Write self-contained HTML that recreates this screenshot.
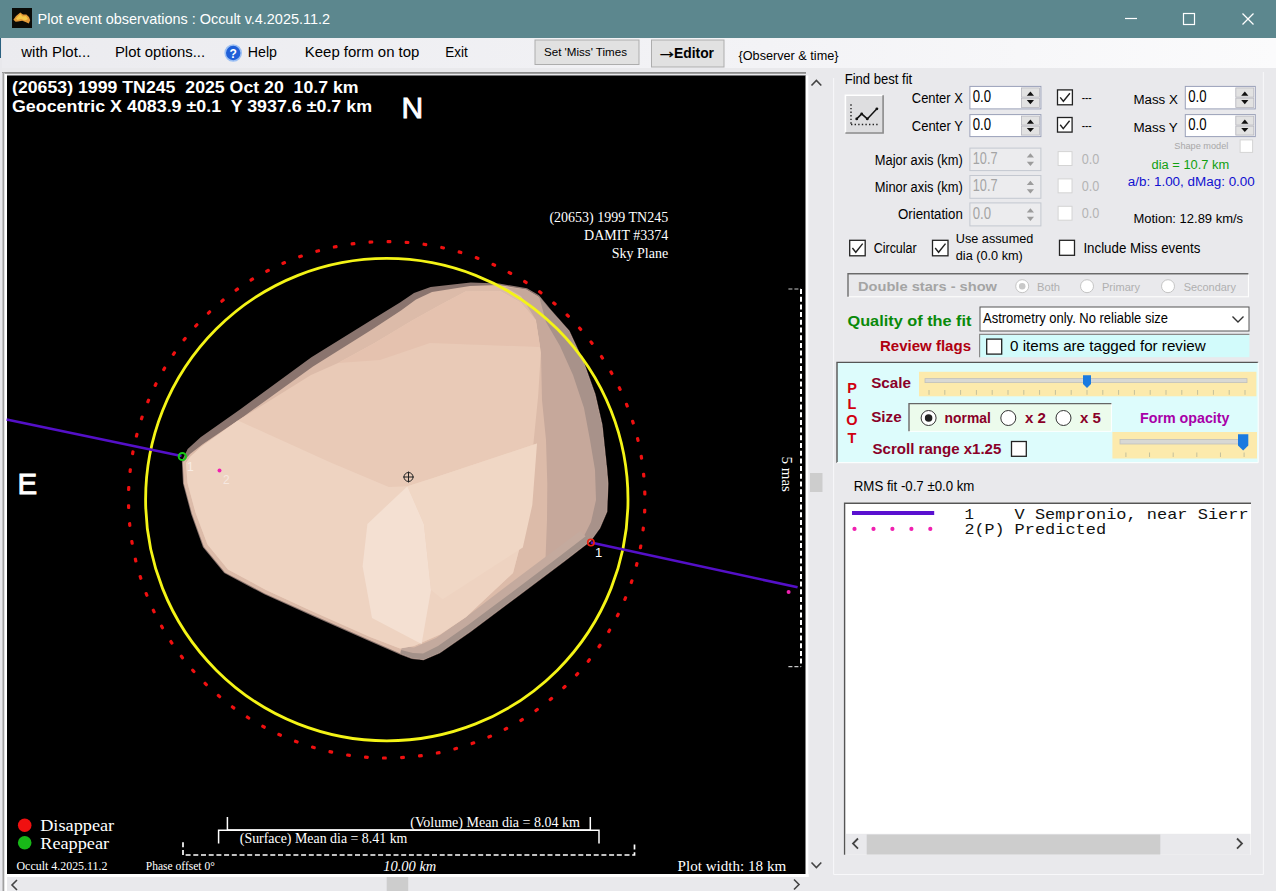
<!DOCTYPE html>
<html lang="en"><head><meta charset="utf-8"><title>Plot event observations : Occult v.4.2025.11.2</title>
<style>html,body{margin:0;padding:0;background:#e9e9ec;overflow:hidden}body{width:1276px;height:891px}svg text{white-space:pre}</style></head>
<body>
<svg width="1276" height="891" viewBox="0 0 1276 891" style="display:block">
<defs><linearGradient id="mg" x1="0" x2="1" y1="0" y2="0"><stop offset="0" stop-color="#ebebef"/><stop offset="0.6" stop-color="#f3f3f6"/><stop offset="1" stop-color="#fbfbfc"/></linearGradient></defs>
<rect x="0" y="0" width="1276" height="891" fill="#e9e9ec"/>
<rect x="0" y="0" width="1276" height="38" fill="#5c878e"/>
<rect x="12" y="8" width="20" height="20" fill="#0a0a06"/>
<path d="M13.4 19.8 L16 16 L20.3 12.5 L23 14.5 L26.4 14.6 L29 17 L30.2 20.3 L28.8 23.6 L25.5 22 L22.2 20.8 L18 21.6 L15.6 21.7 Z" fill="#e09838"/>
<path d="M16 18.5 L20.3 14 L22.5 16.5 L26 16 L28 19 L25 20.5 L21 19 L17.5 20 Z" fill="#f4c848"/>
<text x="37.6" y="24" font-size="15" fill="#fff" font-family='"Liberation Sans", Arial, sans-serif' textLength="292.4" lengthAdjust="spacingAndGlyphs" xml:space="preserve">Plot event observations : Occult v.4.2025.11.2</text>
<line x1="1125" y1="18.5" x2="1137" y2="18.5" stroke="#fff" stroke-width="1.2" />
<rect x="1183.5" y="13.5" width="11" height="11" fill="none" stroke="#fff" stroke-width="1.2"/>
<path d="M1242.5 13.5 L1253.5 24.5 M1253.5 13.5 L1242.5 24.5" stroke="#fff" stroke-width="1.3" fill="none"/>
<rect x="2" y="38" width="1274" height="30" fill="url(#mg)"/>
<rect x="0" y="38" width="2" height="853" fill="#e8e8ec"/>
<rect x="0" y="38" width="1" height="20" fill="#2a6080"/>
<text x="21.3" y="57" font-size="15" fill="#000" font-family='"Liberation Sans", Arial, sans-serif' textLength="69" lengthAdjust="spacingAndGlyphs" xml:space="preserve">with Plot...</text>
<text x="114.9" y="57" font-size="15" fill="#000" font-family='"Liberation Sans", Arial, sans-serif' textLength="90.2" lengthAdjust="spacingAndGlyphs" xml:space="preserve">Plot options...</text>
<circle cx="233.2" cy="53" r="8" fill="#1f5fd8" stroke="#9cc0f4" stroke-width="1.6"/>
<text x="233.2" y="57.6" font-size="12" fill="#fff" font-family='"Liberation Sans", Arial, sans-serif' font-weight="bold" text-anchor="middle" xml:space="preserve">?</text>
<text x="247.8" y="57" font-size="15" fill="#000" font-family='"Liberation Sans", Arial, sans-serif' textLength="29.2" lengthAdjust="spacingAndGlyphs" xml:space="preserve">Help</text>
<text x="304.8" y="57" font-size="15" fill="#000" font-family='"Liberation Sans", Arial, sans-serif' textLength="114.6" lengthAdjust="spacingAndGlyphs" xml:space="preserve">Keep form on top</text>
<text x="445.3" y="57" font-size="15" fill="#000" font-family='"Liberation Sans", Arial, sans-serif' textLength="22.5" lengthAdjust="spacingAndGlyphs" xml:space="preserve">Exit</text>
<rect x="535" y="40" width="104" height="24.5" fill="#e1e1e1" stroke="#adadad" stroke-width="1"/>
<text x="544" y="56.3" font-size="11.5" fill="#000" font-family='"Liberation Sans", Arial, sans-serif' textLength="83" lengthAdjust="spacingAndGlyphs" xml:space="preserve">Set &#x27;Miss&#x27; Times</text>
<rect x="651.5" y="40" width="72.5" height="27" fill="#e1e1e1" stroke="#adadad" stroke-width="1"/>
<text x="656.5" y="57.5" font-size="21" fill="#000" font-family='"Liberation Sans", Arial, sans-serif' font-weight="bold" stroke="#000" stroke-width="0.4" xml:space="preserve">→</text>
<text x="674" y="58.4" font-size="14.5" fill="#000" font-family='"Liberation Sans", Arial, sans-serif' font-weight="bold" textLength="40" lengthAdjust="spacingAndGlyphs" xml:space="preserve">Editor</text>
<text x="738.5" y="59.5" font-size="13.5" fill="#000" font-family='"Liberation Sans", Arial, sans-serif' textLength="100" lengthAdjust="spacingAndGlyphs" xml:space="preserve">{Observer &amp; time}</text>
<line x1="2" y1="72.5" x2="806" y2="72.5" stroke="#8c8c8c" stroke-width="1" />
<line x1="5" y1="73.5" x2="806" y2="73.5" stroke="#a0a0a0" stroke-width="1" />
<rect x="2.5" y="72" width="2" height="819" fill="#a0a0a0"/>
<rect x="4.5" y="74" width="2.5" height="817" fill="#ffffff"/>
<rect x="7" y="75.5" width="799" height="798.5" fill="#000"/>
<g id="asteroid">
<polygon points="183,458.5 187.7,449 200.6,437.3 240.7,409 311.4,357.2 370.3,320.7 400,302.4 414,293 430.6,287 470.7,282.4 499,283.6 527,288.3 539,295.3 550.8,309.5 569.6,330.7 583.8,361.3 595.6,394.3 602.6,425 607.4,470 608.5,483.6 607.4,511.8 600.3,528.3 590.9,541.3 565,561.3 517.8,596.7 470.7,632 440,653.2 423.6,660.3 411.8,659 400,654.4 370.3,641.4 311.4,615.5 264.3,594.3 224.2,573.1 203,547.2 191.2,514.2 183,483.6 181.8,460" fill="#8a746e" />
<polygon points="184,461 190,454 203,444 243,417 313,366.5 372,329.5 401,310.5 416,299.5 432,292 470,286 499,285 526,289.5 538,296.5 550,310 568.8,331 583,361.5 594.8,394.5 601.8,425 606.6,470 607.7,483.6 606.6,511.6 599.5,528 590.3,540.7 564.5,560.6 517.3,596 470.2,631.3 439.6,652.4 423.5,659.4 412,658.1 400.3,653.5 370.6,640.5 311.8,614.6 264.8,593.5 225,572.4 203.8,546.8 192,514 183.8,483.5 182.7,462" fill="#dcbba9" />
<polygon points="505,287 526,289.5 538,296.5 550,310 568.8,331 583,361.5 594.8,394.5 601.8,425 606.6,470 607.7,483.6 606.6,511.6 599.5,528 590.3,540.7 564.5,560.6 545,572 547,520 547.3,484 546,440 542,400 541,353 536,320 521,296" fill="#c6a89b" />
<polygon points="539,296 550,310 568.8,331 583,361.5 594.8,394.5 601.8,425 606.6,470 607.7,483.6 606.6,511.6 599.5,528 590.3,540.7 584,536 591,522 596,500 595,470 590,440 584,408 573,375 560,346 546,322" fill="#a8928a" />
<polygon points="590.3,540.7 564.5,560.6 517.3,596 470.2,631.3 439.6,652.4 423.5,659.4 412,658.1 400.3,653.5 402,646 414,647.5 436,638 466,617 512,582 552,552 580,531" fill="#c4aa9e" />
<polygon points="590.3,540.7 564.5,560.6 517.3,596 470.2,631.3 439.6,652.4 423.5,659.4 412,658.1 400.3,653.5 401,650 413,653 423,653.5 438,646 468,625 515,590 560,556 586,536" fill="#a39189" />
<polygon points="186,463 190.5,456.5 201.5,446.5 241,418.5 311,375 338,363 375,342.7 413,320 440,305 465.5,291.5 500.6,291.3 520.7,302.6 535.7,320.2 540.8,352.8 538.2,395.4 533.2,445.5 529.5,475 528.4,500 527.2,519 513,573 466,617 440,634.4 414,646 400,648.5 370,637 311.5,611 266,590 228,569.5 207.5,544.5 195.5,512.5 187.5,483" fill="#e9cab7" />
<polygon points="338,363 375,342.7 413,320 440,305 465.5,291.5 500.6,291.3 520.7,302.6 535.7,320.2 540,347 430,343 380,360" fill="#e5c2af" />
<polygon points="186,463 190.5,456.5 201.5,446.5 238,420.5 330,462.3 388.8,487 407.4,486.2 431,478.8 537,443.5 533.2,445.5 529.5,475 528.4,500 527.2,519 513,573 466,617 440,634.4 414,646 400,648.5 370,637 311.5,611 266,590 228,569.5 207.5,544.5 195.5,512.5 187.5,483" fill="#eed3c1" />
<polygon points="407.4,486.2 367.4,523.9 362.6,566.3 372,618 421.6,644 431,590 423.9,523.9" fill="#f4e0d2" />
<polygon points="407.4,486.2 431,478.8 537,443.5 532.3,505 522.8,547.5 442.7,599.3 431,590 423.9,523.9" fill="#f0d7c5" />
</g>
<circle cx="386.8" cy="499.6" r="241.2" fill="none" stroke="#f4f416" stroke-width="2.8"/>
<g fill="#f01010">
<rect x="642.3" y="509.5" width="4.8" height="3.2" rx="1.2" transform="rotate(92.5 644.7 511.1)"/>
<rect x="640.8" y="527.4" width="4.8" height="3.2" rx="1.2" transform="rotate(96.5 643.2 529.0)"/>
<rect x="638.2" y="545.3" width="4.8" height="3.2" rx="1.2" transform="rotate(100.5 640.6 546.9)"/>
<rect x="634.3" y="562.8" width="4.8" height="3.2" rx="1.2" transform="rotate(104.5 636.7 564.4)"/>
<rect x="629.2" y="580.1" width="4.8" height="3.2" rx="1.2" transform="rotate(108.5 631.6 581.7)"/>
<rect x="622.8" y="597.0" width="4.8" height="3.2" rx="1.2" transform="rotate(112.5 625.2 598.6)"/>
<rect x="615.4" y="613.4" width="4.8" height="3.2" rx="1.2" transform="rotate(116.5 617.8 615.0)"/>
<rect x="606.8" y="629.2" width="4.8" height="3.2" rx="1.2" transform="rotate(120.5 609.2 630.8)"/>
<rect x="597.1" y="644.4" width="4.8" height="3.2" rx="1.2" transform="rotate(124.5 599.5 646.0)"/>
<rect x="586.4" y="658.9" width="4.8" height="3.2" rx="1.2" transform="rotate(128.5 588.8 660.5)"/>
<rect x="574.7" y="672.6" width="4.8" height="3.2" rx="1.2" transform="rotate(132.5 577.1 674.2)"/>
<rect x="562.0" y="685.5" width="4.8" height="3.2" rx="1.2" transform="rotate(136.5 564.4 687.1)"/>
<rect x="548.5" y="697.4" width="4.8" height="3.2" rx="1.2" transform="rotate(140.5 550.9 699.0)"/>
<rect x="534.2" y="708.4" width="4.8" height="3.2" rx="1.2" transform="rotate(144.5 536.6 710.0)"/>
<rect x="519.2" y="718.4" width="4.8" height="3.2" rx="1.2" transform="rotate(148.5 521.6 720.0)"/>
<rect x="503.5" y="727.2" width="4.8" height="3.2" rx="1.2" transform="rotate(152.5 505.9 728.8)"/>
<rect x="487.3" y="735.0" width="4.8" height="3.2" rx="1.2" transform="rotate(156.5 489.7 736.6)"/>
<rect x="470.5" y="741.6" width="4.8" height="3.2" rx="1.2" transform="rotate(160.5 472.9 743.2)"/>
<rect x="453.3" y="747.0" width="4.8" height="3.2" rx="1.2" transform="rotate(164.5 455.7 748.6)"/>
<rect x="435.8" y="751.2" width="4.8" height="3.2" rx="1.2" transform="rotate(168.5 438.2 752.8)"/>
<rect x="418.0" y="754.2" width="4.8" height="3.2" rx="1.2" transform="rotate(172.5 420.4 755.8)"/>
<rect x="400.1" y="755.9" width="4.8" height="3.2" rx="1.2" transform="rotate(176.5 402.5 757.5)"/>
<rect x="382.0" y="756.4" width="4.8" height="3.2" rx="1.2" transform="rotate(180.5 384.4 758.0)"/>
<rect x="364.0" y="755.6" width="4.8" height="3.2" rx="1.2" transform="rotate(184.5 366.4 757.2)"/>
<rect x="346.1" y="753.6" width="4.8" height="3.2" rx="1.2" transform="rotate(188.5 348.5 755.2)"/>
<rect x="328.4" y="750.3" width="4.8" height="3.2" rx="1.2" transform="rotate(192.5 330.8 751.9)"/>
<rect x="311.0" y="745.8" width="4.8" height="3.2" rx="1.2" transform="rotate(196.5 313.4 747.4)"/>
<rect x="293.9" y="740.0" width="4.8" height="3.2" rx="1.2" transform="rotate(200.5 296.3 741.6)"/>
<rect x="277.2" y="733.2" width="4.8" height="3.2" rx="1.2" transform="rotate(204.5 279.6 734.8)"/>
<rect x="261.1" y="725.1" width="4.8" height="3.2" rx="1.2" transform="rotate(208.5 263.5 726.7)"/>
<rect x="245.6" y="716.0" width="4.8" height="3.2" rx="1.2" transform="rotate(212.5 248.0 717.6)"/>
<rect x="230.7" y="705.8" width="4.8" height="3.2" rx="1.2" transform="rotate(216.5 233.1 707.4)"/>
<rect x="216.6" y="694.5" width="4.8" height="3.2" rx="1.2" transform="rotate(220.5 219.0 696.1)"/>
<rect x="203.3" y="682.4" width="4.8" height="3.2" rx="1.2" transform="rotate(224.5 205.7 684.0)"/>
<rect x="190.9" y="669.3" width="4.8" height="3.2" rx="1.2" transform="rotate(228.5 193.3 670.9)"/>
<rect x="179.5" y="655.4" width="4.8" height="3.2" rx="1.2" transform="rotate(232.5 181.9 657.0)"/>
<rect x="169.0" y="640.7" width="4.8" height="3.2" rx="1.2" transform="rotate(236.5 171.4 642.3)"/>
<rect x="159.6" y="625.3" width="4.8" height="3.2" rx="1.2" transform="rotate(240.5 162.0 626.9)"/>
<rect x="151.3" y="609.4" width="4.8" height="3.2" rx="1.2" transform="rotate(244.5 153.7 611.0)"/>
<rect x="144.1" y="592.8" width="4.8" height="3.2" rx="1.2" transform="rotate(248.5 146.5 594.4)"/>
<rect x="138.1" y="575.8" width="4.8" height="3.2" rx="1.2" transform="rotate(252.5 140.5 577.4)"/>
<rect x="133.2" y="558.5" width="4.8" height="3.2" rx="1.2" transform="rotate(256.5 135.6 560.1)"/>
<rect x="129.6" y="540.8" width="4.8" height="3.2" rx="1.2" transform="rotate(260.5 132.0 542.4)"/>
<rect x="127.3" y="522.9" width="4.8" height="3.2" rx="1.2" transform="rotate(264.5 129.7 524.5)"/>
<rect x="126.2" y="505.0" width="4.8" height="3.2" rx="1.2" transform="rotate(268.5 128.6 506.6)"/>
<rect x="126.3" y="486.9" width="4.8" height="3.2" rx="1.2" transform="rotate(272.5 128.7 488.5)"/>
<rect x="127.8" y="469.0" width="4.8" height="3.2" rx="1.2" transform="rotate(276.5 130.2 470.6)"/>
<rect x="130.4" y="451.1" width="4.8" height="3.2" rx="1.2" transform="rotate(280.5 132.8 452.7)"/>
<rect x="134.3" y="433.6" width="4.8" height="3.2" rx="1.2" transform="rotate(284.5 136.7 435.2)"/>
<rect x="139.4" y="416.3" width="4.8" height="3.2" rx="1.2" transform="rotate(288.5 141.8 417.9)"/>
<rect x="145.8" y="399.4" width="4.8" height="3.2" rx="1.2" transform="rotate(292.5 148.2 401.0)"/>
<rect x="153.2" y="383.0" width="4.8" height="3.2" rx="1.2" transform="rotate(296.5 155.6 384.6)"/>
<rect x="161.8" y="367.2" width="4.8" height="3.2" rx="1.2" transform="rotate(300.5 164.2 368.8)"/>
<rect x="171.5" y="352.0" width="4.8" height="3.2" rx="1.2" transform="rotate(304.5 173.9 353.6)"/>
<rect x="182.2" y="337.5" width="4.8" height="3.2" rx="1.2" transform="rotate(308.5 184.6 339.1)"/>
<rect x="193.9" y="323.8" width="4.8" height="3.2" rx="1.2" transform="rotate(312.5 196.3 325.4)"/>
<rect x="206.6" y="310.9" width="4.8" height="3.2" rx="1.2" transform="rotate(316.5 209.0 312.5)"/>
<rect x="220.1" y="299.0" width="4.8" height="3.2" rx="1.2" transform="rotate(320.5 222.5 300.6)"/>
<rect x="234.4" y="288.0" width="4.8" height="3.2" rx="1.2" transform="rotate(324.5 236.8 289.6)"/>
<rect x="249.4" y="278.0" width="4.8" height="3.2" rx="1.2" transform="rotate(328.5 251.8 279.6)"/>
<rect x="265.1" y="269.2" width="4.8" height="3.2" rx="1.2" transform="rotate(332.5 267.5 270.8)"/>
<rect x="281.3" y="261.4" width="4.8" height="3.2" rx="1.2" transform="rotate(336.5 283.7 263.0)"/>
<rect x="298.1" y="254.8" width="4.8" height="3.2" rx="1.2" transform="rotate(340.5 300.5 256.4)"/>
<rect x="315.3" y="249.4" width="4.8" height="3.2" rx="1.2" transform="rotate(344.5 317.7 251.0)"/>
<rect x="332.8" y="245.2" width="4.8" height="3.2" rx="1.2" transform="rotate(348.5 335.2 246.8)"/>
<rect x="350.6" y="242.2" width="4.8" height="3.2" rx="1.2" transform="rotate(352.5 353.0 243.8)"/>
<rect x="368.5" y="240.5" width="4.8" height="3.2" rx="1.2" transform="rotate(356.5 370.9 242.1)"/>
<rect x="386.6" y="240.0" width="4.8" height="3.2" rx="1.2" transform="rotate(360.5 389.0 241.6)"/>
<rect x="404.6" y="240.8" width="4.8" height="3.2" rx="1.2" transform="rotate(364.5 407.0 242.4)"/>
<rect x="422.5" y="242.8" width="4.8" height="3.2" rx="1.2" transform="rotate(368.5 424.9 244.4)"/>
<rect x="440.2" y="246.1" width="4.8" height="3.2" rx="1.2" transform="rotate(372.5 442.6 247.7)"/>
<rect x="457.6" y="250.6" width="4.8" height="3.2" rx="1.2" transform="rotate(376.5 460.0 252.2)"/>
<rect x="474.7" y="256.4" width="4.8" height="3.2" rx="1.2" transform="rotate(380.5 477.1 258.0)"/>
<rect x="491.4" y="263.2" width="4.8" height="3.2" rx="1.2" transform="rotate(384.5 493.8 264.8)"/>
<rect x="507.5" y="271.3" width="4.8" height="3.2" rx="1.2" transform="rotate(388.5 509.9 272.9)"/>
<rect x="523.0" y="280.4" width="4.8" height="3.2" rx="1.2" transform="rotate(392.5 525.4 282.0)"/>
<rect x="537.9" y="290.6" width="4.8" height="3.2" rx="1.2" transform="rotate(396.5 540.3 292.2)"/>
<rect x="552.0" y="301.9" width="4.8" height="3.2" rx="1.2" transform="rotate(400.5 554.4 303.5)"/>
<rect x="565.3" y="314.0" width="4.8" height="3.2" rx="1.2" transform="rotate(404.5 567.7 315.6)"/>
<rect x="577.7" y="327.1" width="4.8" height="3.2" rx="1.2" transform="rotate(408.5 580.1 328.7)"/>
<rect x="589.1" y="341.0" width="4.8" height="3.2" rx="1.2" transform="rotate(412.5 591.5 342.6)"/>
<rect x="599.6" y="355.7" width="4.8" height="3.2" rx="1.2" transform="rotate(416.5 602.0 357.3)"/>
<rect x="609.0" y="371.1" width="4.8" height="3.2" rx="1.2" transform="rotate(420.5 611.4 372.7)"/>
<rect x="617.3" y="387.0" width="4.8" height="3.2" rx="1.2" transform="rotate(424.5 619.7 388.6)"/>
<rect x="624.5" y="403.6" width="4.8" height="3.2" rx="1.2" transform="rotate(428.5 626.9 405.2)"/>
<rect x="630.5" y="420.6" width="4.8" height="3.2" rx="1.2" transform="rotate(432.5 632.9 422.2)"/>
<rect x="635.4" y="437.9" width="4.8" height="3.2" rx="1.2" transform="rotate(436.5 637.8 439.5)"/>
<rect x="639.0" y="455.6" width="4.8" height="3.2" rx="1.2" transform="rotate(440.5 641.4 457.2)"/>
<rect x="641.3" y="473.5" width="4.8" height="3.2" rx="1.2" transform="rotate(444.5 643.7 475.1)"/>
<rect x="642.4" y="491.4" width="4.8" height="3.2" rx="1.2" transform="rotate(448.5 644.8 493.0)"/>
</g>
<line x1="6.6" y1="419.4" x2="181.5" y2="456" stroke="#5410c8" stroke-width="2.6" />
<line x1="590.9" y1="542.5" x2="797.6" y2="587.3" stroke="#5410c8" stroke-width="2.6" />
<circle cx="182.3" cy="456.5" r="3.6" fill="none" stroke="#18c818" stroke-width="2"/>
<circle cx="590.9" cy="542.5" r="3.2" fill="none" stroke="#f02010" stroke-width="1.6"/>
<circle cx="219.5" cy="470.6" r="2" fill="#f020b0"/>
<circle cx="788.6" cy="592" r="2" fill="#f020b0"/>
<text x="595" y="557" font-size="13" fill="#fff" font-family='"Liberation Sans", Arial, sans-serif' xml:space="preserve">1</text>
<text x="187" y="471" font-size="12" fill="#f8ece4" font-family='"Liberation Sans", Arial, sans-serif' xml:space="preserve">1</text>
<text x="223" y="484" font-size="12" fill="#f6e8e0" font-family='"Liberation Sans", Arial, sans-serif' xml:space="preserve">2</text>
<circle cx="408.5" cy="477" r="4.5" fill="none" stroke="#222" stroke-width="1"/>
<path d="M403 477 H414 M408.5 471.5 V482.5" stroke="#222" stroke-width="1"/>
<text x="12" y="92.7" font-size="16.67" fill="#fff" font-family='"Liberation Sans", Arial, sans-serif' font-weight="bold" textLength="346.6" lengthAdjust="spacingAndGlyphs" xml:space="preserve">(20653) 1999 TN245  2025 Oct 20  10.7 km</text>
<text x="12" y="112.4" font-size="16.67" fill="#fff" font-family='"Liberation Sans", Arial, sans-serif' font-weight="bold" textLength="360" lengthAdjust="spacingAndGlyphs" xml:space="preserve">Geocentric X 4083.9 ±0.1  Y 3937.6 ±0.7 km</text>
<text x="401.6" y="117.9" font-size="30" fill="#fff" font-family='"Liberation Sans", Arial, sans-serif' stroke="#fff" stroke-width="0.9" xml:space="preserve">N</text>
<text x="17.6" y="494" font-size="29.5" fill="#fff" font-family='"Liberation Sans", Arial, sans-serif' stroke="#fff" stroke-width="0.9" xml:space="preserve">E</text>
<text x="668.2" y="221.6" font-size="14" fill="#fff" font-family='"Liberation Serif", "Times New Roman", serif' text-anchor="end" xml:space="preserve">(20653) 1999 TN245</text>
<text x="668.2" y="240.3" font-size="14" fill="#fff" font-family='"Liberation Serif", "Times New Roman", serif' text-anchor="end" xml:space="preserve">DAMIT #3374</text>
<text x="668.2" y="258" font-size="14" fill="#fff" font-family='"Liberation Serif", "Times New Roman", serif' text-anchor="end" xml:space="preserve">Sky Plane</text>
<path d="M801 289 V666.6" fill="none" stroke="#fff" stroke-width="2" stroke-dasharray="5 2.7"/>
<path d="M788.4 289 H801 M788.4 666.6 H801" fill="none" stroke="#c8c8c8" stroke-width="1.2" stroke-dasharray="4 2"/>
<text x="0" y="0" font-size="15" fill="#fff" font-family='"Liberation Serif", "Times New Roman", serif' transform="translate(781.5 456.5) rotate(90)" xml:space="preserve">5 mas</text>
<circle cx="24.7" cy="825.2" r="6.8" fill="#f01010"/>
<circle cx="24.7" cy="842.7" r="6.8" fill="#18b818"/>
<text x="40.2" y="831" font-size="17" fill="#fff" font-family='"Liberation Serif", "Times New Roman", serif' textLength="74" lengthAdjust="spacingAndGlyphs" xml:space="preserve">Disappear</text>
<text x="40.2" y="849" font-size="17" fill="#fff" font-family='"Liberation Serif", "Times New Roman", serif' textLength="69" lengthAdjust="spacingAndGlyphs" xml:space="preserve">Reappear</text>
<text x="16.5" y="869.7" font-size="12" fill="#fff" font-family='"Liberation Serif", "Times New Roman", serif' textLength="91" lengthAdjust="spacingAndGlyphs" xml:space="preserve">Occult 4.2025.11.2</text>
<text x="145.8" y="869.7" font-size="12" fill="#fff" font-family='"Liberation Serif", "Times New Roman", serif' textLength="69" lengthAdjust="spacingAndGlyphs" xml:space="preserve">Phase offset 0°</text>
<path d="M227.4 817 V830 H590.3 V817" fill="none" stroke="#fff" stroke-width="1.5"/>
<path d="M218.6 843.4 V830.3 H599 V843.4" fill="none" stroke="#fff" stroke-width="1.5"/>
<path d="M183 842.2 V855 H634.5 V842.2" fill="none" stroke="#fff" stroke-width="1.7" stroke-dasharray="5 2.7"/>
<text x="410.3" y="826.9" font-size="14" fill="#fff" font-family='"Liberation Serif", "Times New Roman", serif' textLength="169.7" lengthAdjust="spacingAndGlyphs" xml:space="preserve">(Volume) Mean dia = 8.04 km</text>
<text x="239.8" y="842.7" font-size="14" fill="#fff" font-family='"Liberation Serif", "Times New Roman", serif' textLength="167.6" lengthAdjust="spacingAndGlyphs" xml:space="preserve">(Surface) Mean dia = 8.41 km</text>
<text x="383.3" y="871" font-size="14" fill="#fff" font-family='"Liberation Serif", "Times New Roman", serif' font-style="italic" textLength="53" lengthAdjust="spacingAndGlyphs" xml:space="preserve">10.00 km</text>
<text x="677.6" y="870.7" font-size="15" fill="#fff" font-family='"Liberation Serif", "Times New Roman", serif' textLength="108.6" lengthAdjust="spacingAndGlyphs" xml:space="preserve">Plot width: 18 km</text>
<rect x="805.5" y="75.5" width="3" height="801.5" fill="#fff"/>
<rect x="7" y="874" width="801.5" height="3" fill="#fff"/>
<rect x="808.5" y="74" width="15" height="800" fill="#e9e9ec"/>
<rect x="7" y="877" width="816.5" height="14" fill="#e9e9ec"/>
<rect x="810" y="473" width="12.5" height="19" fill="#cdcdcd"/>
<rect x="386.7" y="877" width="21.5" height="14" fill="#cdcdcd"/>
<path d="M811.5 85.5 L816.4 80.5 L821.3 85.5" fill="none" stroke="#444" stroke-width="1.6"/>
<path d="M811.5 862.5 L816.4 867.5 L821.3 862.5" fill="none" stroke="#444" stroke-width="1.6"/>
<path d="M17 880 L12 885 L17 890" fill="none" stroke="#444" stroke-width="1.6"/>
<path d="M794 879.5 L799 884.5 L794 889.5" fill="none" stroke="#444" stroke-width="1.6"/>
<text x="844.7" y="84.2" font-size="14" fill="#000" font-family='"Liberation Sans", Arial, sans-serif' textLength="67.5" lengthAdjust="spacingAndGlyphs" xml:space="preserve">Find best fit</text>
<rect x="844.9" y="94.8" width="38.7" height="38.7" fill="#dedee0"/>
<path d="M845.4 133 V95.3 H883.1" fill="none" stroke="#fff" stroke-width="1.6"/>
<path d="M845.4 133 H883.1 V95.3" fill="none" stroke="#8c8c8c" stroke-width="1.6"/>
<line x1="851" y1="104.3" x2="851" y2="125" stroke="#222" stroke-width="1.4" stroke-dasharray="1.4 2.2"/>
<line x1="851" y1="124.5" x2="878" y2="124.5" stroke="#222" stroke-width="1.4" stroke-dasharray="1.4 2.2"/>
<path d="M856.7 118.9 L861.7 113.9 L867.3 118.9 L876.9 108.8" fill="none" stroke="#111" stroke-width="1.5"/>
<circle cx="856.7" cy="118.9" r="1.4" fill="#111"/>
<circle cx="861.7" cy="113.9" r="1.4" fill="#111"/>
<circle cx="867.3" cy="118.9" r="1.4" fill="#111"/>
<circle cx="876.9" cy="108.8" r="1.4" fill="#111"/>
<text x="962.8" y="103.4" font-size="14" fill="#000" font-family='"Liberation Sans", Arial, sans-serif' text-anchor="end" textLength="51" lengthAdjust="spacingAndGlyphs" xml:space="preserve">Center X</text>
<text x="962.8" y="131.4" font-size="14" fill="#000" font-family='"Liberation Sans", Arial, sans-serif' text-anchor="end" textLength="51" lengthAdjust="spacingAndGlyphs" xml:space="preserve">Center Y</text>
<rect x="969.9" y="86.4" width="71" height="22.5" fill="#fff" stroke="#9aa0b8" stroke-width="1"/>
<rect x="1021.4000000000001" y="87.9" width="18" height="9.25" fill="#e2e2e2" stroke="#b4b4bc" stroke-width="0.8"/>
<rect x="1021.4000000000001" y="98.15" width="18" height="9.25" fill="#e2e2e2" stroke="#b4b4bc" stroke-width="0.8"/>
<path d="M1026.8000000000002 95.77000000000001 L1030.4 91.57000000000001 L1034.0 95.77000000000001 Z" fill="#111"/>
<path d="M1026.8000000000002 100.0 L1030.4 104.2 L1034.0 100.0 Z" fill="#111"/>
<text x="972.8" y="101.80000000000001" font-size="16" fill="#000" font-family='"Liberation Sans", Arial, sans-serif' textLength="18.3" lengthAdjust="spacingAndGlyphs" xml:space="preserve">0.0</text>
<rect x="969.9" y="114.6" width="71" height="22" fill="#fff" stroke="#9aa0b8" stroke-width="1"/>
<rect x="1021.4000000000001" y="116.1" width="18" height="9.0" fill="#e2e2e2" stroke="#b4b4bc" stroke-width="0.8"/>
<rect x="1021.4000000000001" y="126.1" width="18" height="9.0" fill="#e2e2e2" stroke="#b4b4bc" stroke-width="0.8"/>
<path d="M1026.8000000000002 123.75999999999999 L1030.4 119.55999999999999 L1034.0 123.75999999999999 Z" fill="#111"/>
<path d="M1026.8000000000002 127.89999999999999 L1030.4 132.1 L1034.0 127.89999999999999 Z" fill="#111"/>
<text x="972.8" y="129.5" font-size="16" fill="#000" font-family='"Liberation Sans", Arial, sans-serif' textLength="18.3" lengthAdjust="spacingAndGlyphs" xml:space="preserve">0.0</text>
<rect x="1057.5" y="89.9" width="14.9" height="14.9" fill="#fff" stroke="#222" stroke-width="1.3"/>
<path d="M1060.2 97.35000000000001 L1063.36 101.30000000000001 L1069.9 93.2" fill="none" stroke="#222" stroke-width="1.4"/>
<rect x="1057.5" y="117.5" width="14.6" height="14.6" fill="#fff" stroke="#222" stroke-width="1.3"/>
<path d="M1060.2 124.8 L1063.24 128.6 L1069.6 120.8" fill="none" stroke="#222" stroke-width="1.4"/>
<text x="1081.7" y="102" font-size="12" fill="#000" font-family='"Liberation Sans", Arial, sans-serif' textLength="10" lengthAdjust="spacingAndGlyphs" xml:space="preserve">---</text>
<text x="1081.7" y="129.5" font-size="12" fill="#000" font-family='"Liberation Sans", Arial, sans-serif' textLength="10" lengthAdjust="spacingAndGlyphs" xml:space="preserve">---</text>
<text x="1133.4" y="103.8" font-size="12.5" fill="#000" font-family='"Liberation Sans", Arial, sans-serif' textLength="44.4" lengthAdjust="spacingAndGlyphs" xml:space="preserve">Mass X</text>
<text x="1133.4" y="131.5" font-size="12.5" fill="#000" font-family='"Liberation Sans", Arial, sans-serif' textLength="44.4" lengthAdjust="spacingAndGlyphs" xml:space="preserve">Mass Y</text>
<rect x="1185.3" y="86.4" width="70" height="22.5" fill="#fff" stroke="#9aa0b8" stroke-width="1"/>
<rect x="1235.8" y="87.9" width="18" height="9.25" fill="#e2e2e2" stroke="#b4b4bc" stroke-width="0.8"/>
<rect x="1235.8" y="98.15" width="18" height="9.25" fill="#e2e2e2" stroke="#b4b4bc" stroke-width="0.8"/>
<path d="M1241.2 95.77000000000001 L1244.8 91.57000000000001 L1248.3999999999999 95.77000000000001 Z" fill="#111"/>
<path d="M1241.2 100.0 L1244.8 104.2 L1248.3999999999999 100.0 Z" fill="#111"/>
<text x="1188.2" y="101.80000000000001" font-size="16" fill="#000" font-family='"Liberation Sans", Arial, sans-serif' textLength="18.3" lengthAdjust="spacingAndGlyphs" xml:space="preserve">0.0</text>
<rect x="1185.3" y="114.6" width="70" height="22" fill="#fff" stroke="#9aa0b8" stroke-width="1"/>
<rect x="1235.8" y="116.1" width="18" height="9.0" fill="#e2e2e2" stroke="#b4b4bc" stroke-width="0.8"/>
<rect x="1235.8" y="126.1" width="18" height="9.0" fill="#e2e2e2" stroke="#b4b4bc" stroke-width="0.8"/>
<path d="M1241.2 123.75999999999999 L1244.8 119.55999999999999 L1248.3999999999999 123.75999999999999 Z" fill="#111"/>
<path d="M1241.2 127.89999999999999 L1244.8 132.1 L1248.3999999999999 127.89999999999999 Z" fill="#111"/>
<text x="1188.2" y="129.5" font-size="16" fill="#000" font-family='"Liberation Sans", Arial, sans-serif' textLength="18.3" lengthAdjust="spacingAndGlyphs" xml:space="preserve">0.0</text>
<text x="1174.3" y="148.5" font-size="9.5" fill="#a8a8a8" font-family='"Liberation Sans", Arial, sans-serif' textLength="54" lengthAdjust="spacingAndGlyphs" xml:space="preserve">Shape model</text>
<rect x="1240.1" y="139.9" width="12.5" height="12.5" fill="#fff" stroke="#d4d4d4" stroke-width="1"/>
<text x="962.8" y="164.6" font-size="14" fill="#000" font-family='"Liberation Sans", Arial, sans-serif' text-anchor="end" textLength="88" lengthAdjust="spacingAndGlyphs" xml:space="preserve">Major axis (km)</text>
<text x="962.8" y="191.5" font-size="14" fill="#000" font-family='"Liberation Sans", Arial, sans-serif' text-anchor="end" textLength="88" lengthAdjust="spacingAndGlyphs" xml:space="preserve">Minor axis (km)</text>
<text x="962.8" y="218.8" font-size="14" fill="#000" font-family='"Liberation Sans", Arial, sans-serif' text-anchor="end" textLength="64.8" lengthAdjust="spacingAndGlyphs" xml:space="preserve">Orientation</text>
<rect x="969.9" y="148.1" width="71" height="22.5" fill="#ececee" stroke="#c4c8d0" stroke-width="1"/>
<path d="M1026.8000000000002 157.47 L1030.4 153.27 L1034.0 157.47 Z" fill="#9c9c9c"/>
<path d="M1026.8000000000002 161.7 L1030.4 165.89999999999998 L1034.0 161.7 Z" fill="#9c9c9c"/>
<text x="972.8" y="163.5" font-size="16" fill="#a4a4a4" font-family='"Liberation Sans", Arial, sans-serif' textLength="24.7" lengthAdjust="spacingAndGlyphs" xml:space="preserve">10.7</text>
<rect x="969.9" y="175.5" width="71" height="22.8" fill="#ececee" stroke="#c4c8d0" stroke-width="1"/>
<path d="M1026.8000000000002 184.996 L1030.4 180.79600000000002 L1034.0 184.996 Z" fill="#9c9c9c"/>
<path d="M1026.8000000000002 189.28 L1030.4 193.48 L1034.0 189.28 Z" fill="#9c9c9c"/>
<text x="972.8" y="191.20000000000002" font-size="16" fill="#a4a4a4" font-family='"Liberation Sans", Arial, sans-serif' textLength="24.7" lengthAdjust="spacingAndGlyphs" xml:space="preserve">10.7</text>
<rect x="969.9" y="202.9" width="71" height="23" fill="#ececee" stroke="#c4c8d0" stroke-width="1"/>
<path d="M1026.8000000000002 212.48000000000002 L1030.4 208.28000000000003 L1034.0 212.48000000000002 Z" fill="#9c9c9c"/>
<path d="M1026.8000000000002 216.8 L1030.4 221.0 L1034.0 216.8 Z" fill="#9c9c9c"/>
<text x="972.8" y="218.8" font-size="16" fill="#a4a4a4" font-family='"Liberation Sans", Arial, sans-serif' textLength="18.3" lengthAdjust="spacingAndGlyphs" xml:space="preserve">0.0</text>
<rect x="1058.1" y="151.6" width="13.9" height="13.9" fill="#fff" stroke="#d4d4d4" stroke-width="1"/>
<text x="1081.7" y="163.5" font-size="14" fill="#b4b4b4" font-family='"Liberation Sans", Arial, sans-serif' textLength="17.6" lengthAdjust="spacingAndGlyphs" xml:space="preserve">0.0</text>
<rect x="1058.1" y="178.9" width="13.9" height="13.9" fill="#fff" stroke="#d4d4d4" stroke-width="1"/>
<text x="1081.7" y="190.8" font-size="14" fill="#b4b4b4" font-family='"Liberation Sans", Arial, sans-serif' textLength="17.6" lengthAdjust="spacingAndGlyphs" xml:space="preserve">0.0</text>
<rect x="1058.1" y="206.3" width="13.9" height="13.9" fill="#fff" stroke="#d4d4d4" stroke-width="1"/>
<text x="1081.7" y="218.20000000000002" font-size="14" fill="#b4b4b4" font-family='"Liberation Sans", Arial, sans-serif' textLength="17.6" lengthAdjust="spacingAndGlyphs" xml:space="preserve">0.0</text>
<text x="1151.6" y="168.8" font-size="12.5" fill="#10a010" font-family='"Liberation Sans", Arial, sans-serif' textLength="77.6" lengthAdjust="spacingAndGlyphs" xml:space="preserve">dia = 10.7 km</text>
<text x="1127.8" y="185.6" font-size="12.5" fill="#1010d0" font-family='"Liberation Sans", Arial, sans-serif' textLength="127" lengthAdjust="spacingAndGlyphs" xml:space="preserve">a/b: 1.00, dMag: 0.00</text>
<text x="1133.4" y="223" font-size="12.5" fill="#000" font-family='"Liberation Sans", Arial, sans-serif' textLength="109.7" lengthAdjust="spacingAndGlyphs" xml:space="preserve">Motion: 12.89 km/s</text>
<rect x="849.7" y="240.3" width="15.5" height="15.5" fill="#fff" stroke="#222" stroke-width="1.3"/>
<path d="M852.4000000000001 248.05 L855.8000000000001 252.3 L862.7 243.60000000000002" fill="none" stroke="#222" stroke-width="1.4"/>
<text x="873.7" y="252.7" font-size="14" fill="#000" font-family='"Liberation Sans", Arial, sans-serif' textLength="43" lengthAdjust="spacingAndGlyphs" xml:space="preserve">Circular</text>
<rect x="932.5" y="240.3" width="15.5" height="15.5" fill="#fff" stroke="#222" stroke-width="1.3"/>
<path d="M935.2 248.05 L938.6 252.3 L945.5 243.60000000000002" fill="none" stroke="#222" stroke-width="1.4"/>
<text x="955.8" y="243.3" font-size="12.5" fill="#000" font-family='"Liberation Sans", Arial, sans-serif' textLength="77.5" lengthAdjust="spacingAndGlyphs" xml:space="preserve">Use assumed</text>
<text x="955.8" y="260" font-size="12.5" fill="#000" font-family='"Liberation Sans", Arial, sans-serif' textLength="67" lengthAdjust="spacingAndGlyphs" xml:space="preserve">dia (0.0 km)</text>
<rect x="1059.5" y="240.3" width="15" height="15" fill="#fff" stroke="#222" stroke-width="1.3"/>
<text x="1083.4" y="252.7" font-size="14" fill="#000" font-family='"Liberation Sans", Arial, sans-serif' textLength="117" lengthAdjust="spacingAndGlyphs" xml:space="preserve">Include Miss events</text>
<rect x="848" y="273.8" width="400.4" height="23" fill="#e9e9ec" stroke="#fff" stroke-width="1"/>
<path d="M848 296.8 V273.8 H1248.4" fill="none" stroke="#6a6a6a" stroke-width="1.4"/>
<text x="858" y="290.8" font-size="13.5" fill="#a4a4a4" font-family='"Liberation Sans", Arial, sans-serif' font-weight="bold" textLength="139" lengthAdjust="spacingAndGlyphs" xml:space="preserve">Double stars - show</text>
<circle cx="1022.2" cy="286.2" r="6.5" fill="#fff" stroke="#c4c4c4" stroke-width="1"/>
<circle cx="1022.2" cy="286.2" r="3.25" fill="#c8c8c8"/>
<text x="1037" y="291" font-size="10.5" fill="#b0b0b0" font-family='"Liberation Sans", Arial, sans-serif' textLength="23" lengthAdjust="spacingAndGlyphs" xml:space="preserve">Both</text>
<circle cx="1087" cy="286.2" r="6.5" fill="#fff" stroke="#c4c4c4" stroke-width="1"/>
<text x="1102" y="291" font-size="10.5" fill="#b0b0b0" font-family='"Liberation Sans", Arial, sans-serif' textLength="38" lengthAdjust="spacingAndGlyphs" xml:space="preserve">Primary</text>
<circle cx="1168" cy="286.2" r="6.5" fill="#fff" stroke="#c4c4c4" stroke-width="1"/>
<text x="1183.7" y="291" font-size="10.5" fill="#b0b0b0" font-family='"Liberation Sans", Arial, sans-serif' textLength="52.3" lengthAdjust="spacingAndGlyphs" xml:space="preserve">Secondary</text>
<text x="847.5" y="326.4" font-size="14.5" fill="#0a8a0a" font-family='"Liberation Sans", Arial, sans-serif' font-weight="bold" textLength="124" lengthAdjust="spacingAndGlyphs" xml:space="preserve">Quality of the fit</text>
<rect x="980" y="307" width="269" height="24" fill="#fff" stroke="#555" stroke-width="1"/>
<text x="983" y="323" font-size="14" fill="#000" font-family='"Liberation Sans", Arial, sans-serif' textLength="185" lengthAdjust="spacingAndGlyphs" xml:space="preserve">Astrometry only. No reliable size</text>
<path d="M1232.5 316.5 L1238 322 L1243.5 316.5" fill="none" stroke="#333" stroke-width="1.4"/>
<text x="880" y="350.9" font-size="14.5" fill="#b00010" font-family='"Liberation Sans", Arial, sans-serif' font-weight="bold" textLength="91" lengthAdjust="spacingAndGlyphs" xml:space="preserve">Review flags</text>
<rect x="979.6" y="334.4" width="269.8" height="22.8" fill="#d2fbfb"/>
<path d="M979.6 357.2 V334.4 H1249.4" fill="none" stroke="#8a8a8a" stroke-width="1.2"/>
<rect x="986.7" y="339.1" width="15" height="15" fill="#fff" stroke="#222" stroke-width="1.3"/>
<text x="1010" y="350.9" font-size="15" fill="#000" font-family='"Liberation Sans", Arial, sans-serif' textLength="195.7" lengthAdjust="spacingAndGlyphs" xml:space="preserve">0 items are tagged for review</text>
<rect x="837" y="362.4" width="421.2" height="100.3" fill="#ddfcfc"/>
<path d="M837 462.7 V362.4 H1258.2" fill="none" stroke="#555" stroke-width="1.4"/>
<path d="M837 462.7 H1258.2 V362.4" fill="none" stroke="#fff" stroke-width="1"/>
<text x="852" y="392.8" font-size="14.5" fill="#d00010" font-family='"Liberation Sans", Arial, sans-serif' font-weight="bold" text-anchor="middle" xml:space="preserve">P</text>
<text x="852" y="408.5" font-size="14.5" fill="#d00010" font-family='"Liberation Sans", Arial, sans-serif' font-weight="bold" text-anchor="middle" xml:space="preserve">L</text>
<text x="852" y="424.5" font-size="14.5" fill="#d00010" font-family='"Liberation Sans", Arial, sans-serif' font-weight="bold" text-anchor="middle" xml:space="preserve">O</text>
<text x="852" y="442.5" font-size="14.5" fill="#d00010" font-family='"Liberation Sans", Arial, sans-serif' font-weight="bold" text-anchor="middle" xml:space="preserve">T</text>
<text x="871.2" y="388.3" font-size="14.5" fill="#8a0028" font-family='"Liberation Sans", Arial, sans-serif' font-weight="bold" textLength="39.8" lengthAdjust="spacingAndGlyphs" xml:space="preserve">Scale</text>
<rect x="919" y="371.8" width="337.4" height="24.5" fill="#fceaac"/>
<rect x="925" y="378.6" width="322" height="4" fill="#d8d8d4" stroke="#c0c0bc" stroke-width="0.8"/>
<line x1="929.0" y1="390" x2="929.0" y2="394.8" stroke="#c4c09c" stroke-width="1" />
<line x1="944.8" y1="390" x2="944.8" y2="394.8" stroke="#c4c09c" stroke-width="1" />
<line x1="960.6" y1="390" x2="960.6" y2="394.8" stroke="#c4c09c" stroke-width="1" />
<line x1="976.4" y1="390" x2="976.4" y2="394.8" stroke="#c4c09c" stroke-width="1" />
<line x1="992.2" y1="390" x2="992.2" y2="394.8" stroke="#c4c09c" stroke-width="1" />
<line x1="1008.0" y1="390" x2="1008.0" y2="394.8" stroke="#c4c09c" stroke-width="1" />
<line x1="1023.8" y1="390" x2="1023.8" y2="394.8" stroke="#c4c09c" stroke-width="1" />
<line x1="1039.6" y1="390" x2="1039.6" y2="394.8" stroke="#c4c09c" stroke-width="1" />
<line x1="1055.4" y1="390" x2="1055.4" y2="394.8" stroke="#c4c09c" stroke-width="1" />
<line x1="1071.2" y1="390" x2="1071.2" y2="394.8" stroke="#c4c09c" stroke-width="1" />
<line x1="1087.0" y1="390" x2="1087.0" y2="394.8" stroke="#c4c09c" stroke-width="1" />
<line x1="1102.8" y1="390" x2="1102.8" y2="394.8" stroke="#c4c09c" stroke-width="1" />
<line x1="1118.6" y1="390" x2="1118.6" y2="394.8" stroke="#c4c09c" stroke-width="1" />
<line x1="1134.4" y1="390" x2="1134.4" y2="394.8" stroke="#c4c09c" stroke-width="1" />
<line x1="1150.2" y1="390" x2="1150.2" y2="394.8" stroke="#c4c09c" stroke-width="1" />
<line x1="1166.0" y1="390" x2="1166.0" y2="394.8" stroke="#c4c09c" stroke-width="1" />
<line x1="1181.8" y1="390" x2="1181.8" y2="394.8" stroke="#c4c09c" stroke-width="1" />
<line x1="1197.6" y1="390" x2="1197.6" y2="394.8" stroke="#c4c09c" stroke-width="1" />
<line x1="1213.4" y1="390" x2="1213.4" y2="394.8" stroke="#c4c09c" stroke-width="1" />
<line x1="1229.2" y1="390" x2="1229.2" y2="394.8" stroke="#c4c09c" stroke-width="1" />
<line x1="1245.0" y1="390" x2="1245.0" y2="394.8" stroke="#c4c09c" stroke-width="1" />
<path d="M1083 375.2 H1091 V384 L1087 388 L1083 384 Z" fill="#1a7ae0"/>
<text x="871.2" y="421.5" font-size="14.5" fill="#8a0028" font-family='"Liberation Sans", Arial, sans-serif' font-weight="bold" textLength="30.5" lengthAdjust="spacingAndGlyphs" xml:space="preserve">Size</text>
<rect x="909" y="403.6" width="202.4" height="27.7" fill="#ecfbec" stroke="#fff" stroke-width="1"/>
<path d="M909 431.3 V403.6 H1111.4" fill="none" stroke="#666" stroke-width="1.4"/>
<circle cx="928.6" cy="418" r="7.5" fill="#fff" stroke="#333" stroke-width="1"/>
<circle cx="928.6" cy="418" r="3.75" fill="#222"/>
<text x="944.6" y="423" font-size="14.5" fill="#8a0028" font-family='"Liberation Sans", Arial, sans-serif' font-weight="bold" textLength="46.2" lengthAdjust="spacingAndGlyphs" xml:space="preserve">normal</text>
<circle cx="1008.3" cy="418" r="7.5" fill="#fff" stroke="#333" stroke-width="1"/>
<text x="1025" y="423" font-size="14.5" fill="#8a0028" font-family='"Liberation Sans", Arial, sans-serif' font-weight="bold" textLength="21" lengthAdjust="spacingAndGlyphs" xml:space="preserve">x 2</text>
<circle cx="1063.5" cy="418" r="7.5" fill="#fff" stroke="#333" stroke-width="1"/>
<text x="1080" y="423" font-size="14.5" fill="#8a0028" font-family='"Liberation Sans", Arial, sans-serif' font-weight="bold" textLength="21" lengthAdjust="spacingAndGlyphs" xml:space="preserve">x 5</text>
<text x="1140" y="422.5" font-size="14.5" fill="#a800a8" font-family='"Liberation Sans", Arial, sans-serif' font-weight="bold" textLength="89.5" lengthAdjust="spacingAndGlyphs" xml:space="preserve">Form opacity</text>
<rect x="1112.4" y="432" width="144.6" height="26.5" fill="#fceaac"/>
<rect x="1120" y="439.4" width="124" height="4.6" fill="#d8d8d4" stroke="#c0c0bc" stroke-width="0.8"/>
<line x1="1125.9" y1="452.5" x2="1125.9" y2="457" stroke="#c4c09c" stroke-width="1" />
<line x1="1149.5400000000002" y1="452.5" x2="1149.5400000000002" y2="457" stroke="#c4c09c" stroke-width="1" />
<line x1="1173.18" y1="452.5" x2="1173.18" y2="457" stroke="#c4c09c" stroke-width="1" />
<line x1="1196.8200000000002" y1="452.5" x2="1196.8200000000002" y2="457" stroke="#c4c09c" stroke-width="1" />
<line x1="1220.46" y1="452.5" x2="1220.46" y2="457" stroke="#c4c09c" stroke-width="1" />
<line x1="1244.1000000000001" y1="452.5" x2="1244.1000000000001" y2="457" stroke="#c4c09c" stroke-width="1" />
<path d="M1238 434.3 H1248.3 V445.5 L1243.15 450.4 L1238 445.5 Z" fill="#1a7ae0"/>
<text x="872.6" y="454" font-size="14.5" fill="#8a0028" font-family='"Liberation Sans", Arial, sans-serif' font-weight="bold" textLength="128.7" lengthAdjust="spacingAndGlyphs" xml:space="preserve">Scroll range x1.25</text>
<rect x="1011.5" y="441.5" width="14.8" height="14.8" fill="#fff" stroke="#222" stroke-width="1.3"/>
<text x="853.8" y="490.8" font-size="14" fill="#000" font-family='"Liberation Sans", Arial, sans-serif' textLength="120.6" lengthAdjust="spacingAndGlyphs" xml:space="preserve">RMS fit -0.7 ±0.0 km</text>
<rect x="844" y="502.6" width="407" height="352.2" fill="#fff"/>
<path d="M844.6 854.8 V503.2 H1251" fill="none" stroke="#555" stroke-width="1.4"/>
<line x1="852" y1="513.1" x2="934.2" y2="513.1" stroke="#5a10d0" stroke-width="4" />
<circle cx="854.5" cy="528.9" r="2.1" fill="#f020b0"/>
<circle cx="873.5" cy="528.9" r="2.1" fill="#f020b0"/>
<circle cx="892.4" cy="528.9" r="2.1" fill="#f020b0"/>
<circle cx="911.4" cy="528.9" r="2.1" fill="#f020b0"/>
<circle cx="930.3" cy="528.9" r="2.1" fill="#f020b0"/>
<text x="964.6" y="518.7" font-size="15" fill="#111" font-family='"Liberation Mono", "Courier New", monospace' textLength="9.5" lengthAdjust="spacingAndGlyphs" xml:space="preserve">1</text>
<text x="1014.6" y="518.7" font-size="15" fill="#111" font-family='"Liberation Mono", "Courier New", monospace' textLength="234" lengthAdjust="spacingAndGlyphs" xml:space="preserve">V Sempronio, near Sierr</text>
<text x="964.6" y="534.1" font-size="15" fill="#111" font-family='"Liberation Mono", "Courier New", monospace' textLength="40" lengthAdjust="spacingAndGlyphs" xml:space="preserve">2(P)</text>
<text x="1014.6" y="534.1" font-size="15" fill="#111" font-family='"Liberation Mono", "Courier New", monospace' textLength="91.5" lengthAdjust="spacingAndGlyphs" xml:space="preserve">Predicted</text>
<rect x="846" y="833.8" width="404.5" height="21" fill="#e9e9ec"/>
<rect x="866.7" y="834.5" width="293.6" height="20" fill="#cdcdcd"/>
<path d="M858 838.5 L853 843.6 L858 848.7" fill="none" stroke="#444" stroke-width="1.8"/>
<path d="M1237 838.5 L1242 843.6 L1237 848.7" fill="none" stroke="#444" stroke-width="1.8"/>
<path d="M833.6 78 V874.5 H1263.4 V72" fill="none" stroke="#f8f8fa" stroke-width="1"/>
</svg>
</body></html>
